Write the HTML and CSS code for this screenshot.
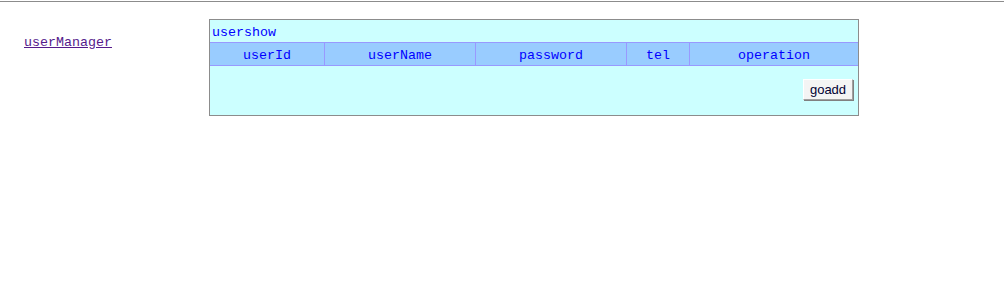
FILE: index.html
```html
<!DOCTYPE html>
<html>
<head>
<meta charset="utf-8">
<link rel="stylesheet" href="styles.css">
</head>
<body>
<div class="topline"></div>
<div class="page">
  <div class="nav"><a class="navlink" href="#">userManager</a></div>
  <div class="panel">
    <div class="title">usershow</div>
    <div class="thead">
      <div class="th c-id">userId</div>
      <div class="th c-name">userName</div>
      <div class="th c-pass">password</div>
      <div class="th c-tel">tel</div>
      <div class="th c-op">operation</div>
    </div>
    <div class="tbody">
      <button class="btn" type="button">goadd</button>
    </div>
  </div>
</div>
</body>
</html>
```
FILE: styles.css
```css
html, body {
  margin: 0;
  padding: 0;
  background: #ffffff;
}
body {
  font-family: "Liberation Mono", "DejaVu Sans Mono", monospace;
  font-size: 13.33px;
  line-height: 16px;
}
.topline {
  margin-top: 1px;
  height: 1px;
  background: #8c8c8c;
}
.page {
  display: flex;
  align-items: flex-start;
}
.nav {
  width: 209px;
  box-sizing: border-box;
  padding: 33px 0 0 24px;
}
.navlink {
  color: #551a8b;
  text-decoration: underline;
}
.panel {
  margin-top: 17px;
  width: 650px;
  box-sizing: border-box;
  border: 1px solid #8c8c8c;
  background: #ccffff;
  color: #0000ff;
}
.title {
  height: 22px;
  box-sizing: border-box;
  padding: 4px 0 0 2px;
  line-height: 18px;
}
.thead {
  display: flex;
  background: #99ccff;
  border-top: 1px solid #9999ff;
  border-bottom: 1px solid #9999ff;
  height: 22px;
}
.th {
  box-sizing: border-box;
  text-align: center;
  padding-top: 4px;
  line-height: 18px;
  border-right: 1px solid #9999ff;
}
.c-id { width: 115px; }
.c-name { width: 151px; }
.c-pass { width: 151px; }
.c-tel { width: 63px; }
.c-op { width: 168px; border-right: none; }
.tbody {
  height: 49px;
  display: flex;
  justify-content: flex-end;
  align-items: flex-start;
  padding: 13px 5px 0 0;
  box-sizing: border-box;
}
.btn {
  font-family: "Liberation Sans", Arial, sans-serif;
  font-size: 13px;
  color: #000033;
  background: #f4f4f4;
  border: 1px solid;
  border-color: #ffffff #a0a0a0 #a0a0a0 #ffffff;
  box-shadow: 1px 1px 0 #808080;
  height: 21px;
  width: 50px;
  padding: 0;
  margin: 0;
}
```
